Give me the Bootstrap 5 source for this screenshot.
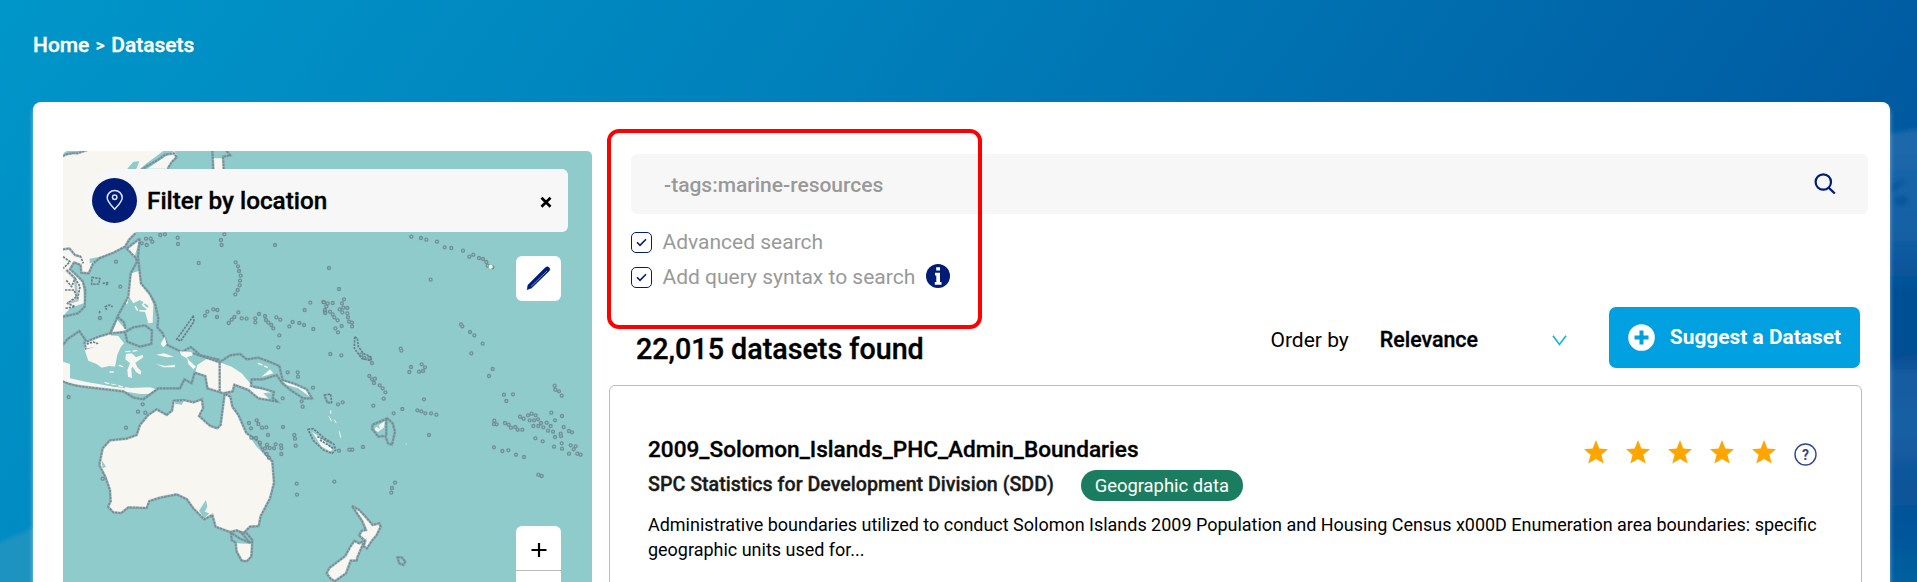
<!DOCTYPE html>
<html lang="en">
<head>
<meta charset="utf-8">
<meta name="viewport" content="width=device-width, initial-scale=1">
<title>Datasets</title>
<link href="https://cdn.jsdelivr.net/npm/bootstrap@5.3.0/dist/css/bootstrap.min.css" rel="stylesheet">
<style>
body{font-family:Roboto,"Liberation Sans",sans-serif;color:#000;height:582px;overflow:hidden;background:linear-gradient(126deg,#0096c9 0%,#0081bb 36%,#0060a5 78%,#004f98 98%)}
.page{padding:0 27px 0 33px;height:582px}
.bg-art{position:absolute;left:0;top:0}
.crumbs{height:102px;padding-top:30px;font-size:21px;line-height:30px;font-weight:500;gap:6.5px}
.crumbs .sep{font-size:17px}
.crumbs,.filterbar .label,.heading,.order .value,.ds-title,.org>span:first-child{-webkit-text-stroke:.35px currentColor}
.panel{height:520px;border-radius:8px 8px 0 0;padding:49px 0 0 30px;box-shadow:0 4px 4px #ffffff80;gap:17px}
.mapbox{width:529px;height:500px;border-radius:5px;background:#8fcbcb}
.map-svg{position:absolute;left:0;top:0}
.map-svg .land{fill:#f7f6f1}
.map-svg .sea{fill:#8fcbcb}
.map-svg .coast{fill:none;stroke:#667f89;stroke-width:5;stroke-dasharray:7 3;stroke-linejoin:round}
.map-svg .halo{fill:none;stroke:#7d98a0;stroke-opacity:.55;stroke-width:8}
.map-svg .isle{stroke:#66838b;stroke-opacity:.8;stroke-width:13;stroke-linecap:round;fill:none}
.map-svg .core{stroke:#a3bfc2;stroke-width:5;stroke-linecap:round;fill:none}
.map-svg .reef{fill:none;stroke:#f7f6f1;stroke-width:5;stroke-linecap:round;stroke-linejoin:round}
.filterbar{position:absolute;left:22px;top:18px;width:483px;height:63px;border-radius:32px 6px 6px 32px;background:#f7f7f7;padding:0 15px 0 7px;font-size:24.3px;font-weight:500}
.filterbar .label{margin:2px 0 0 10px}
.tool{position:absolute;left:453px;width:45px;background:#fff}
.tool-edit{top:105px;height:45px;border-radius:6px}
.tool-zoom{top:375px;height:90px;border-radius:6px}
.tool-zoom .plus{height:45px;border-bottom:1px solid #bbb}
.main-col{width:1261px;padding-top:3px}
.search{margin-left:22px;width:1237px;height:60px;background:#f7f7f7;border-radius:6px;padding:0 32px 0 33px;font-size:21px;font-weight:500;color:#999}
.search span{padding-top:3px}
.checks{margin-left:22px;padding-top:11px;color:#999;font-size:21px}
.check-row{height:35px;gap:10.5px}
.check-row .txt{padding-top:1px}
.tick{width:21px;height:21px;border:1.3px solid #001c77;border-radius:5px}
.mark-frame{position:absolute;left:607px;top:129px;width:375px;height:200px;border:4px solid red;border-radius:12px}
.toolbar{margin-top:12px;height:61px;width:1251px}
.heading{font-size:28.7px;font-weight:500;line-height:34px;margin:23px 0 0 27px}
.order{font-size:21px;padding-top:6px}
.order .value{font-size:21.4px;font-weight:500;margin-left:31px}
.order svg{margin-left:74px}
.btn-suggest{width:251px;height:61px;background:#00a0e1;color:#fff;border-radius:7px;font-size:20.9px;font-weight:700;margin-left:42px;padding:0 18px}
.btn-suggest:hover{background:#008fca;color:#fff}
.result{height:240px;width:1253px;border:1px solid #bbb;border-radius:6px;margin-top:17px;padding:48px 42px 0 38px}
.title-row{height:30px;padding-right:2px}
.ds-title{font-size:22.6px;font-weight:500;line-height:30px;padding-top:1px}
.org{font-size:19.65px;font-weight:500;color:#1a1a1a;height:31px;margin-top:6px;line-height:30px}
.tagpill{background:#1b7d5f;color:#fff;font-size:18.4px;font-weight:400;height:31px;width:162px;border-radius:16px;margin-left:27px}
.desc{font-size:17.98px;line-height:25px;margin-top:11px}
.stars{height:24px;gap:18px;margin-top:6px}
</style>
</head>
<body>
<div class="page position-relative overflow-hidden">
<svg class="bg-art" width="1917" height="582">
 <defs>
  <linearGradient id="photo" x1="0" y1="0" x2="0" y2="1"><stop offset="0" stop-color="#1d69ac"/><stop offset=".22" stop-color="#1560a5"/><stop offset=".36" stop-color="#014f95"/><stop offset=".5" stop-color="#074f95"/><stop offset=".53" stop-color="#155b9f"/><stop offset=".65" stop-color="#195fa4"/><stop offset=".78" stop-color="#0c5498"/><stop offset=".85" stop-color="#02559a"/><stop offset="1" stop-color="#0660a0"/></linearGradient>
  <filter id="soft"><feGaussianBlur stdDeviation="2"/></filter>
 </defs>
 <path d="M1880 135L1925 128V590H1880Z" fill="url(#photo)" filter="url(#soft)"/>
 <g fill="#034e93" filter="url(#soft)" opacity=".6"><ellipse cx="1901" cy="201" rx="7" ry="5"/><path d="M1891 185L1905 178 1902 184 1892 193ZM1890 350L1917 342V352L1890 362Z"/></g>
 <path d="M-5 544L40 525V590H-5Z" fill="#1f93c1" filter="url(#soft)"/>
</svg>
<nav class="crumbs d-flex text-white position-relative"><span>Home</span><span class="sep">&gt;</span><span>Datasets</span></nav>
<div class="panel bg-white d-flex position-relative">
 <aside class="mapbox position-relative flex-shrink-0 overflow-hidden">
 <svg class="map-svg" width="529" height="431" viewBox="63 151 529 431">
  <defs>
   <path id="i1" d="M446 369h0M675 315h0M383 293h0M384 312h0M515 315h0M513 300h0M523 283h0M198 365h0M211 440h0M150 534h0M465 527h0M472 515h0M490 508h0M502 510h0M501 531h0M536 549h0M545 539h0M553 531h0M565 517h0M575 535h0M590 536h0M616 535h0M616 547h0M627 522h0M645 528h0M648 540h0M655 548h0M664 555h0M670 565h0M679 532h0M691 539h0M688 586h0M685 622h0M718 559h0M728 546h0M748 549h0M762 555h0M790 567h0M764 510h0M781 488h0M820 486h0M829 499h0M825 515h0M557 367h0M564 379h0M567 393h0M572 407h0M570 422h0M569 436h0M563 450h0M556 463h0M275 310h0M288 296h0M302 296h0M290 315h0M307 305h0M331 285h0M345 283h0"/>
   <path id="i2" d="M274 290h0M303 294h0M319 299h0M351 305h0M374 322h0M394 324h0M429 332h0M448 350h0M460 344h0M477 354h0M489 357h0M499 366h0M503 377h0M517 382h0M27 384h0M332 419h0M57 447h0M12 487h0M23 490h0M38 489h0M15 510h0M16 519h0M30 515h0M38 523h0M43 532h0M53 541h0M65 558h0M46 565h0M54 577h0M72 478h0M66 490h0M59 508h0M70 503h0M82 504h0M67 517h0M82 520h0M84 532h0M87 545h0M96 548h0M96 559h0M423 553h0M427 559h0M450 576h0M463 586h0M488 611h0M454 640h0M242 626h0M244 632h0M31 642h0M64 646h0"/>
   <path id="i4" d="M56 141h0M264 185h0M278 163h0M286 188h0M228 233h0M158 386h0M713 67h0M743 67h0M744 80h0M789 113h0M698 145h0M755 154h0M758 170h0M597 219h0M603 235h0M620 211h0M625 222h0M636 233h0M649 232h0M654 255h0M604 263h0M618 264h0M630 278h0M645 295h0M651 284h0M659 294h0M677 283h0M693 286h0M672 295h0M694 295h0M694 312h0M699 231h0M737 287h0M733 255h0M735 266h0M740 401h0M741 434h0M650 312h0M657 323h0"/>
   <path id="i5" d="M124 14h0M133 24h0M148 24h0M156 39h0M148 78h0M156 88h0M165 86h0M162 99h0M179 106h0M188 115h0M196 127h0M191 146h0M160 167h0M221 190h0M247 177h0M312 148h0M273 51h0M268 66h0M305 43h0M315 52h0M309 63h0M297 65h0M292 181h0M304 184h0M316 190h0M333 190h0M349 194h0M327 255h0M54 163h0M68 157h0M57 302h0M88 299h0M97 299h0M129 291h0M43 395h0M225 398h0M216 414h0M214 428h0M518 57h0M507 78h0M552 134h0M579 133h0M559 153h0M704 107h0M706 119h0M717 124h0M725 137h0M523 212h0M522 222h0M530 223h0M555 219h0M566 224h0M573 233h0M586 231h0M593 239h0M607 239h0M600 200h0M611 206h0M624 196h0M635 191h0M647 196h0M629 211h0M642 211h0M654 208h0M663 219h0M640 228h0M655 228h0M670 232h0M680 218h0M692 228h0M684 242h0M699 245h0M694 188h0M726 198h0M705 211h0M731 231h0M722 251h0M747 243h0M756 247h0M705 261h0M723 258h0M646 265h0M668 274h0M702 290h0M725 280h0M726 296h0M752 286h0M767 289h0M761 298h0M747 311h0M772 311h0M782 314h0M522 292h0M547 303h0M565 301h0M588 314h0M612 321h0M655 374h0M665 378h0"/>
   <path id="chinaCoast" d="M39 48Q55 38 82 40L112 30M272 90L300 73 326 58 345 44 372 40 380 52 365 66 353 86M487 31L490 88M521 88L519 50 541 46 528 31M256 280L238 298 225 320 190 338 150 354 129 371 116 400 94 398 92 375 72 367 60 388 78 404 98 424 106 450 104 500 84 520 39 530"/>
   <path id="philCoast" d="M269 296L230 326 257 353 261 365 242 400 235 470 202 530 222 547 226 566M269 296L264 350 273 430 298 460 315 490 325 535 322 562 338 580 352 615 395 636 423 621 450 645 510 660M202 532L180 580 146 590 110 605 88 573 52 598 39 615M180 580L225 576 232 605 270 620 304 612 306 572 285 556 250 562 226 576"/>
   <path id="indoCoast" d="M39 94Q60 105 100 110L220 124 250 143 280 148 325 115 390 115 403 88 425 100 434 68 466 78 472 115 520 130M430 10L509 37 540 16 570 12 590 28 625 23 660 36 688 48 698 90 735 102 770 118 786 145 760 145 724 122 697 100 680 75 640 88 605 88 603 108 640 116 672 126 668 143 682 155 625 145 595 120 553 104 548 124 520 130M509 37V128"/>
   <path id="ausCoast" d="M524 132L512 225 502 235 481 228 447 198 459 175 456 148 430 157 401 150 371 152 366 182 350 195 320 178 295 195 270 225 260 255 230 266 180 271 158 295 148 345 166 380 180 420 182 454 174 470 190 487 214 489 235 472 290 474 298 453 330 443 380 433 410 447 430 475 463 508 487 495 497 530 540 546 560 541 580 550 600 530 626 528 632 498 660 445 672 398 667 335 640 305 625 274 589 249 565 195 547 170 541 140Z"/>
   <path id="tas" d="M543 548L545 570 557 578 560 605 575 632 590 634 604 620 607 570 590 550 572 546 600 578 570 566Z"/>
   <path id="nz" d="M96 468L118 480 139 503 158 525 178 520 182 530 170 555 155 573 141 595 131 588 136 573 117 556 126 542 138 540 126 512ZM103 573L118 580 133 573 112 622 110 632 92 632 78 670 44 694 30 684 20 670 28 654 76 618 91 590Z"/>
   <path id="fiji" d="M202 205L158 224 156 236 175 260 196 258 204 280 216 284 225 245 218 220ZM199 207V258"/>
   <path id="caledonia" d="M-36 238L-20 236 10 262 42 283 47 300 36 310 10 300 -20 272Z"/>
  </defs>
  <g transform="translate(50 140) scale(.33333)">
   <path class="land" d="M39 48L115 30H372L380 45 353 86H272L256 280 238 298 225 320 190 338 150 354 129 371 116 400 94 398 92 375 72 367 60 388 98 424 104 500 84 520 39 528ZM488 55L520 55V90H493ZM269 296L230 326 253 352ZM202 540L228 570 185 582ZM182 580L103 605V630H182Z"/>
   <path class="sea" d="M373 33L330 60 290 88 274 84 290 70 340 33ZM232 86L250 65 268 64 262 80 245 110Z"/>
   <path class="sea" d="M119 356L150 350 218 330 190 350 119 370ZM39 528L60 505 100 490 104 500 84 520Z"/>
   <path class="land" d="M244 400L266 393 273 430 298 462 310 495 308 548 295 550 285 515 296 498 270 480 250 490 234 466Z"/>
   <path class="reef" d="M258 480L295 470 278 495 304 515 270 512M242 440L230 490M256 500L262 510"/>
   <g class="coast"><use href="#chinaCoast"/><use href="#philCoast"/>
    <path d="M39 328L58 325 75 345 92 350 100 370M39 350L60 365 40 385M50 390L75 415 65 440 48 420M45 450L72 450 80 470 52 490 75 500 45 505M75 415L90 440 82 480M126 412L150 416 146 432 125 433ZM158 430L175 428 168 437M148 520L150 512M165 500L178 495 188 500M170 510L165 498M430 528L380 598 392 603 432 545ZM103 605L108 630 175 615 190 590M110 612L130 606 160 618 184 600"/></g>
   <use class="halo" href="#chinaCoast"/><use class="halo" href="#philCoast"/>
   <path class="halo" d="M39 328L58 325 75 345 92 350M48 390L75 415 82 480 52 490M103 605L108 630 175 615 190 590"/>
   <use class="isle" href="#i1"/><use class="core" href="#i1"/>
  </g>
  <g transform="translate(50 350) scale(.33333)">
   <path class="land" d="M39 35L60 42V85L110 96 222 115 300 112 318 118 296 132 270 132 220 124 100 110 39 94ZM104 0L130 -8 160 -30 175 -44 205 -42 222 -20 212 -8 202 14 195 50 178 48 155 53 140 42 115 32ZM436 66L442 45 470 26 509 37 545 50 575 70 600 100 612 115 650 120 670 126 640 130 660 150 625 145 595 120 553 104 548 124 515 128 475 115 466 78ZM660 58L635 80 670 70ZM698 92L735 102 770 118 783 143 745 115 710 105Z"/>
   <path class="land" d="M228 12L245 10 258 22 278 14 280 22 256 38 262 52 274 64 272 74 258 66 248 50 244 56 246 84 234 80 232 60 240 40 226 28ZM318 42L345 48 375 44 374 52 340 52ZM388 4L424 6 428 16 410 22 420 34 438 50 430 58 415 42 412 26 394 16ZM332 -18L344 -40 350 -18 340 -8ZM318 14L342 10 372 20 350 22Z"/>
   <path class="reef" d="M228 5L262 2M208 46L218 50M180 66L190 66M625 40L652 52M165 98L240 116" stroke-dasharray="12 9" style="stroke-width:4"/>
   <path class="sea" d="M600 89L650 82 640 105 605 108ZM120 96L200 112 200 106Z"/>
   <use class="land" href="#ausCoast"/>
   <path class="sea" d="M468 450L447 482 463 505 478 490 464 485 472 470ZM375 152L401 153 396 164 376 162ZM155 330L168 350 158 355ZM600 262L630 278 640 310 620 290Z"/>
   <path class="land" d="M557 580L606 582 603 618 588 632 575 628 562 605Z"/>
   <g class="coast"><use href="#indoCoast"/><use href="#ausCoast"/><use href="#tas"/></g>
   <g class="halo"><use href="#indoCoast"/><use href="#ausCoast"/><use href="#tas"/></g>
   <use class="isle" href="#i4"/><use class="core" href="#i4"/>
  </g>
  <g transform="translate(320 350) scale(.33333)">
   <use class="land" href="#nz"/><use class="coast" href="#nz"/><use class="halo" href="#nz"/>
   <path class="land" d="M194 214L176 226 180 236 168 230 164 240 174 246 192 232ZM-24 245L10 270 38 300 30 304 5 290Z"/>
   <path class="reef" d="M27 200L34 212M32 182V190M44 210L48 218M58 245L62 262M258 282h1" style="stroke-width:3"/>
   <g class="coast"><use href="#fiji"/><use href="#caledonia"/><path d="M13 135L32 132 35 158 22 158ZM-8 260L38 280M0 270L40 295M232 622L245 622 256 635 250 645 238 640Z"/></g>
   <g class="halo"><use href="#fiji"/><path d="M232 622L245 622 256 635 250 645 238 640ZM13 135L22 158 35 158"/></g>
   <use class="isle" href="#i5"/><use class="core" href="#i5"/>
  </g>
  <g transform="translate(320 140) scale(.33333)">
   <use class="isle" href="#i2"/><use class="core" href="#i2"/>
   <circle cx="512" cy="380" r="6" fill="#f7f6f1"/>
   <path class="coast" d="M104 590L112 595 115 620 130 640 155 652 152 662 125 655 103 625Z"/>
  </g>
 </svg>
 <div class="filterbar d-flex align-items-center">
  <svg width="45" height="45" viewBox="0 0 45 45"><circle cx="22.5" cy="22.5" r="22.5" fill="#001c77"/><path d="M22.7 31.2C19.5 27.500 15.2 23.400 15.2 19.700A7.5 7.2 0 0 1 30.2 19.700C30.2 23.400 26 27.500 22.7 31.2Z" fill="none" stroke="#dfe3f2" stroke-width="1.5"/><circle cx="22.7" cy="19.2" r="2.2" fill="none" stroke="#dfe3f2" stroke-width="1.5"/></svg>
  <span class="label">Filter by location</span>
  <svg class="ms-auto mt-1" width="14" height="14" viewBox="0 0 14 14"><path d="M2.500 1.700L11.500 10.700M11.500 1.700L2.500 10.700" stroke="#000" stroke-width="2.700"/></svg>
 </div>
 <div class="tool tool-edit"><svg class="d-block" width="45" height="45" viewBox="0 0 45 45"><path d="M11.2 33.600L12 29 29.500 11.600Q31.500 10 33.300 11.800 34.600 13.500 33 15L15.500 32Z" fill="#001c77" stroke="#001c77" stroke-width=".6"/><path d="M15 30.500L31 15" stroke="#7a8bc4" stroke-width="1"/></svg></div>
 <div class="tool tool-zoom"><div class="plus"><svg class="d-block" width="45" height="44" viewBox="0 0 45 44"><path d="M15.500 24H30.500M23 17V31" stroke="#000" stroke-width="2.200"/></svg></div></div>
 </aside>
 <main class="main-col">
  <div class="search d-flex align-items-center justify-content-between"><span>-tags:marine-resources</span>
   <svg width="22" height="22" viewBox="0 0 22 22"><circle cx="9.300" cy="9" r="7.700" fill="none" stroke="#001c77" stroke-width="2.200"/><path d="M14.500 14.500L20.800 20.500" stroke="#001c77" stroke-width="2.400"/></svg></div>
  <div class="checks">
   <div class="check-row d-flex align-items-center"><span class="tick d-flex align-items-center justify-content-center"><svg width="11" height="9" viewBox="0 0 11 9"><path d="M1 4.300L4 7.300 10 1.300" fill="none" stroke="#001c77" stroke-width="1.600"/></svg></span><span class="txt">Advanced search</span></div>
   <div class="check-row d-flex align-items-center"><span class="tick d-flex align-items-center justify-content-center"><svg width="11" height="9" viewBox="0 0 11 9"><path d="M1 4.300L4 7.300 10 1.300" fill="none" stroke="#001c77" stroke-width="1.600"/></svg></span><span class="txt">Add query syntax to search</span>
    <svg class="mb-1" width="24" height="24" viewBox="0 0 24 24"><circle cx="12" cy="12" r="12" fill="#001c77"/><path d="M10.200 3.200H14V6.500H10.200ZM9 8.800H14V18H15.500V20.800H8.800V18H10.300V11.500H9Z" fill="#fff"/></svg></div>
  </div>
  <div class="toolbar d-flex align-items-center">
   <h1 class="heading">22,015 datasets found</h1>
   <div class="order d-flex align-items-center ms-auto"><span>Order by</span><span class="value">Relevance</span><svg width="15" height="11" viewBox="0 0 15 11"><path d="M1 .7L7.500 9.500 14 .7" fill="none" stroke="#14b4d6" stroke-width="1.600"/></svg></div>
   <button class="btn btn-suggest d-flex align-items-center justify-content-between text-nowrap"><svg width="27" height="27" viewBox="0 0 27 27"><circle cx="13.500" cy="13.500" r="13.300" fill="#fff"/><path d="M6.500 13.500H20.500M13.500 6.500V20.500" stroke="#00a0e1" stroke-width="4"/></svg><span>Suggest a Dataset</span></button>
  </div>
  <article class="result">
   <div class="title-row d-flex justify-content-between align-items-start">
    <h2 class="ds-title mb-0">2009_Solomon_Islands_PHC_Admin_Boundaries</h2>
    <div class="stars d-flex align-items-center">
     <svg width="24" height="24" viewBox="0 0 24 24"><path id="star" d="M12 0L15.300 8.600 24 9.200 17.400 14.800 19.700 23.600 12 19 4.300 23.600 6.600 14.800 0 9.200 8.700 8.600Z" fill="#ffa500"/></svg>
     <svg width="24" height="24"><use href="#star"/></svg><svg width="24" height="24"><use href="#star"/></svg><svg width="24" height="24"><use href="#star"/></svg><svg width="24" height="24"><use href="#star"/></svg>
     <svg class="mt-1" width="23" height="23" viewBox="0 0 23 23"><circle cx="11.500" cy="11.500" r="10.500" fill="none" stroke="#34478f" stroke-width="1.400"/><text x="11.500" y="16.500" text-anchor="middle" font-size="14" font-weight="700" fill="#34478f">?</text></svg>
    </div>
   </div>
   <div class="org d-flex"><span>SPC Statistics for Development Division (SDD)</span><span class="tagpill d-flex align-items-center justify-content-center">Geographic data</span></div>
   <p class="desc mb-0">Administrative boundaries utilized to conduct Solomon Islands 2009 Population and Housing Census x000D Enumeration area boundaries: specific geographic units used for...</p>
  </article>
 </main>
</div>
<div class="mark-frame"></div>
</div>
<script src="https://cdn.jsdelivr.net/npm/bootstrap@5.3.0/dist/js/bootstrap.bundle.min.js"></script>
</body>
</html>
